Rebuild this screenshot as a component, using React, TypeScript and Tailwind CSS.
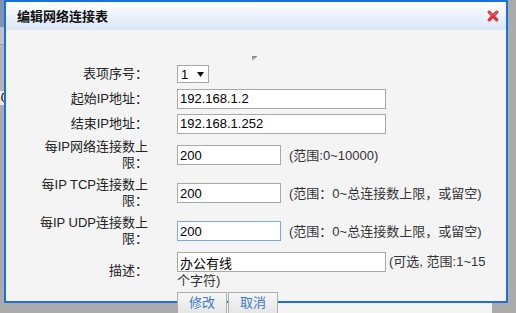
import type { ReactNode } from "react";

function Row({ label, h, children, cell = "" }: { label?: ReactNode; h: string; children: ReactNode; cell?: string }) {
  return (
    <div className={`flex items-center ${h}`}>
      <div className="w-[112px] shrink-0 text-right leading-[16px] text-[#222]">{label}</div>
      <div className={`ml-[29px] w-[315px] ${cell}`}>{children}</div>
    </div>
  );
}

function Field({ value, wide = false, focus = false }: { value: string; wide?: boolean; focus?: boolean }) {
  return (
    <input
      readOnly
      defaultValue={value}
      className={`inline-block h-[20px] align-middle bg-white px-[2px] text-[13px] text-black outline-none border ${
        wide ? "w-[209px]" : "w-[104px]"
      } ${focus ? "border-[#7ea9e4]" : "border-[#a9a9a9]"}`}
    />
  );
}

function Hint({ children }: { children: ReactNode }) {
  return <span className="ml-[8px] align-middle text-[#333]">{children}</span>;
}

export default function App() {
  return (
    <div className="relative w-[516px] h-[313px] overflow-hidden bg-[#ababab] font-['Liberation_Sans','Noto_Sans_CJK_SC',sans-serif] text-[13px]">
      {/* page behind the dialog */}
      <div className="w-[4px] h-full overflow-hidden flex flex-col">
        <div className="h-[27px] shrink-0 bg-[#8094ac]" />
        <div className="h-[18px] shrink-0 bg-[#c2c2c2] border-b border-[#999]" />
        <div className="h-[46px] shrink-0 bg-[#b4b4b4]" />
        <div className="h-[14px] shrink-0 bg-[#e8e8e8] flex justify-end leading-[14px] text-black">
          <span className="-mr-[4px]">0</span>
        </div>
        <div className="flex-1 bg-[#aaaaaa]" />
      </div>

      {/* dialog */}
      <div className="absolute left-[4px] top-0 w-[504px] h-[303px] p-[2px] bg-[#f4f4f4] flex flex-col">
        <div className="pointer-events-none absolute inset-0 z-[1] border-2 border-[#1a6fe6]" />

        <div className="h-[28px] shrink-0 flex items-center justify-between pl-[11px] pr-[7px] bg-linear-to-b from-[#fdfeff] to-[#dae6f7]">
          <span className="font-bold text-[13px] text-[#111] font-['Noto_Sans_CJK_SC',sans-serif]">编辑网络连接表</span>
          <svg width="12" height="12" viewBox="0 0 12 12">
            <path d="M2.2 2.2 L9.8 9.8 M9.8 2.2 L2.2 9.8" stroke="#e0343a" strokeWidth="3.2" strokeLinecap="round" />
            <path d="M2.6 2.6 L5 5 M9.4 2.6 L7 5" stroke="#f47a7e" strokeWidth="1" strokeLinecap="round" />
          </svg>
        </div>

        <div className="h-[32px] shrink-0 flex justify-center items-end pb-[1px]">
          <svg width="5" height="5" viewBox="0 0 5 5" className="ml-[-4px]">
            <rect x="0" y="0" width="5" height="1" fill="#8a8a8a" />
            <rect x="0" y="1" width="4" height="1" fill="#9a9a9a" />
            <rect x="0" y="2" width="3" height="1" fill="#a8a8a8" />
            <rect x="0" y="3" width="2" height="1" fill="#b8b8b8" />
            <rect x="0" y="4" width="1" height="1" fill="#c8c8c8" />
          </svg>
        </div>

        <div className="ml-[30px] flex flex-col">
          <Row label="表项序号：" h="h-[24px]">
            <div className="w-[32px] h-[18px] border border-[#a9a9a9] bg-white flex items-center justify-between pl-[3px] pr-[4px] text-black">
              <span className="leading-none">1</span>
              <svg width="7" height="5" viewBox="0 0 7 5">
                <polygon points="0,0 7,0 3.5,5" fill="#111" />
              </svg>
            </div>
          </Row>
          <Row label="起始IP地址：" h="h-[25px]">
            <Field value="192.168.1.2" wide />
          </Row>
          <Row label="结束IP地址：" h="h-[25px]">
            <Field value="192.168.1.252" wide />
          </Row>
          <Row label="每IP网络连接数上限：" h="h-[38px]">
            <Field value="200" />
            <Hint>(范围:0~10000)</Hint>
          </Row>
          <Row label="每IP TCP连接数上限：" h="h-[38px]">
            <Field value="200" />
            <Hint>(范围：0~总连接数上限，或留空)</Hint>
          </Row>
          <Row label="每IP UDP连接数上限：" h="h-[38px]">
            <Field value="200" focus />
            <Hint>(范围：0~总连接数上限，或留空)</Hint>
          </Row>
          <Row label="描述：" h="h-[41px]">
            <div className="leading-[16px] text-[#333]">
              <Field value="办公有线" wide />
              <span className="ml-[3px] align-middle">(可选, 范围:1~15个字符)</span>
            </div>
          </Row>
          <Row h="h-[24px]" cell="h-[24px] bg-[#f4f4f4] pt-[1px] flex">
            <button className="relative z-[2] w-[50px] h-[22px] border border-[#adadad] bg-linear-to-b from-[#f7f7f7] to-[#e6e6e6] text-[#3b78d4]">
              修改
            </button>
            <button className="relative z-[2] ml-[1px] w-[50px] h-[22px] border border-[#adadad] bg-linear-to-b from-[#f7f7f7] to-[#e6e6e6] text-[#3b78d4]">
              取消
            </button>
          </Row>
        </div>
      </div>
    </div>
  );
}
